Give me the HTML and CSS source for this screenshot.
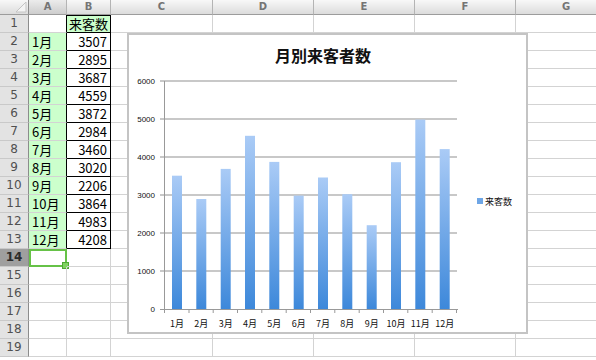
FILE: index.html
```html
<!DOCTYPE html>
<html lang="ja">

<head>
    <meta charset="UTF-8">
    <title>月別来客者数</title>
    <link rel="stylesheet" href="styles.css">
</head>

<body>
    <div class="sheet">
        <div class="row head">
            <div class="corner"><svg width="12" height="12" viewBox="0 0 12 12"><path d="M11 1 L11 11 L1 11 Z" fill="#f4f4f4" stroke="#c4c4c4"/></svg></div>
            <div class="col sel">A</div><div class="col">B</div><div class="col">C</div><div class="col">D</div><div class="col">E</div><div class="col">F</div><div class="col">G</div>
        </div>
        <div class="row"><div class="num">1</div><div class="c a-edge"></div><div class="c b hl">来客数</div><div class="c"></div><div class="c"></div><div class="c"></div><div class="c"></div><div class="c"></div></div>
        <div class="row"><div class="num">2</div><div class="c a hl">1月</div><div class="c b r">3507</div><div class="c"></div><div class="c"></div><div class="c"></div><div class="c"></div><div class="c"></div></div>
        <div class="row"><div class="num">3</div><div class="c a hl">2月</div><div class="c b r">2895</div><div class="c"></div><div class="c"></div><div class="c"></div><div class="c"></div><div class="c"></div></div>
        <div class="row"><div class="num">4</div><div class="c a hl">3月</div><div class="c b r">3687</div><div class="c"></div><div class="c"></div><div class="c"></div><div class="c"></div><div class="c"></div></div>
        <div class="row"><div class="num">5</div><div class="c a hl">4月</div><div class="c b r">4559</div><div class="c"></div><div class="c"></div><div class="c"></div><div class="c"></div><div class="c"></div></div>
        <div class="row"><div class="num">6</div><div class="c a hl">5月</div><div class="c b r">3872</div><div class="c"></div><div class="c"></div><div class="c"></div><div class="c"></div><div class="c"></div></div>
        <div class="row"><div class="num">7</div><div class="c a hl">6月</div><div class="c b r">2984</div><div class="c"></div><div class="c"></div><div class="c"></div><div class="c"></div><div class="c"></div></div>
        <div class="row"><div class="num">8</div><div class="c a hl">7月</div><div class="c b r">3460</div><div class="c"></div><div class="c"></div><div class="c"></div><div class="c"></div><div class="c"></div></div>
        <div class="row"><div class="num">9</div><div class="c a hl">8月</div><div class="c b r">3020</div><div class="c"></div><div class="c"></div><div class="c"></div><div class="c"></div><div class="c"></div></div>
        <div class="row"><div class="num">10</div><div class="c a hl">9月</div><div class="c b r">2206</div><div class="c"></div><div class="c"></div><div class="c"></div><div class="c"></div><div class="c"></div></div>
        <div class="row"><div class="num">11</div><div class="c a hl">10月</div><div class="c b r">3864</div><div class="c"></div><div class="c"></div><div class="c"></div><div class="c"></div><div class="c"></div></div>
        <div class="row"><div class="num">12</div><div class="c a hl">11月</div><div class="c b r">4983</div><div class="c"></div><div class="c"></div><div class="c"></div><div class="c"></div><div class="c"></div></div>
        <div class="row"><div class="num">13</div><div class="c a hl">12月</div><div class="c b r">4208</div><div class="c"></div><div class="c"></div><div class="c"></div><div class="c"></div><div class="c"></div></div>
        <div class="row"><div class="num on">14</div><div class="c active"><span class="handle"></span></div><div class="c"></div><div class="c"></div><div class="c"></div><div class="c"></div><div class="c"></div><div class="c"></div></div>
        <div class="row"><div class="num">15</div><div class="c"></div><div class="c"></div><div class="c"></div><div class="c"></div><div class="c"></div><div class="c"></div><div class="c"></div></div>
        <div class="row"><div class="num">16</div><div class="c"></div><div class="c"></div><div class="c"></div><div class="c"></div><div class="c"></div><div class="c"></div><div class="c"></div></div>
        <div class="row"><div class="num">17</div><div class="c"></div><div class="c"></div><div class="c"></div><div class="c"></div><div class="c"></div><div class="c"></div><div class="c"></div></div>
        <div class="row"><div class="num">18</div><div class="c"></div><div class="c"></div><div class="c"></div><div class="c"></div><div class="c"></div><div class="c"></div><div class="c"></div></div>
        <div class="row"><div class="num">19</div><div class="c"></div><div class="c"></div><div class="c"></div><div class="c"></div><div class="c"></div><div class="c"></div><div class="c"></div></div>
    </div>

    <!-- グラフ (シート上に浮かぶオブジェクト) -->
    <div class="chart">
        <svg width="401" height="301" viewBox="127 33 401 301">
            <defs>
                <linearGradient id="bar" x1="0" y1="0" x2="0" y2="1">
                    <stop offset="0" stop-color="#aacbf6"/>
                    <stop offset="1" stop-color="#3d88da"/>
                </linearGradient>
            </defs>
            <text class="title" x="323" y="62" text-anchor="middle">月別来客者数</text>

            <g class="grid">
                <line x1="160" y1="81" x2="457" y2="81"/>
                <line x1="160" y1="119" x2="457" y2="119"/>
                <line x1="160" y1="157" x2="457" y2="157"/>
                <line x1="160" y1="195" x2="457" y2="195"/>
                <line x1="160" y1="233" x2="457" y2="233"/>
                <line x1="160" y1="271" x2="457" y2="271"/>
            </g>
            <g class="ylab" text-anchor="end">
                <text x="155" y="84">6000</text>
                <text x="155" y="122">5000</text>
                <text x="155" y="160">4000</text>
                <text x="155" y="198">3000</text>
                <text x="155" y="236">2000</text>
                <text x="155" y="274">1000</text>
                <text x="155" y="312">0</text>
            </g>

            <g fill="url(#bar)">
                <rect x="172" y="175.7" width="10" height="133.3"/>
                <rect x="196.3" y="199" width="10" height="110"/>
                <rect x="220.7" y="168.9" width="10" height="140.1"/>
                <rect x="245" y="135.8" width="10" height="173.2"/>
                <rect x="269.3" y="161.9" width="10" height="147.1"/>
                <rect x="293.7" y="195.6" width="10" height="113.4"/>
                <rect x="318" y="177.5" width="10" height="131.5"/>
                <rect x="342.3" y="194.2" width="10" height="114.8"/>
                <rect x="366.7" y="225.2" width="10" height="83.8"/>
                <rect x="391" y="162.2" width="10" height="146.8"/>
                <rect x="415.3" y="119.6" width="10" height="189.4"/>
                <rect x="439.7" y="149.1" width="10" height="159.9"/>
            </g>

            <g class="axis">
                <line x1="164.5" y1="81" x2="164.5" y2="310"/>
                <line x1="160" y1="309.5" x2="458" y2="309.5"/>
                <path d="M164.5 309 v4 M189 309 v4 M213.2 309 v4 M237.5 309 v4 M261.8 309 v4 M286.2 309 v4 M310.5 309 v4 M334.8 309 v4 M359.2 309 v4 M383.5 309 v4 M407.8 309 v4 M432.2 309 v4 M456.5 309 v4"/>
            </g>

            <g class="xlab" text-anchor="middle">
                <text x="177" y="327">1月</text>
                <text x="201.3" y="327">2月</text>
                <text x="225.7" y="327">3月</text>
                <text x="250" y="327">4月</text>
                <text x="274.3" y="327">5月</text>
                <text x="298.7" y="327">6月</text>
                <text x="323" y="327">7月</text>
                <text x="347.3" y="327">8月</text>
                <text x="371.7" y="327">9月</text>
                <text x="396" y="327">10月</text>
                <text x="420.3" y="327">11月</text>
                <text x="444.7" y="327">12月</text>
            </g>

            <rect x="477" y="198" width="6" height="6" fill="#6ea6e6"/>
            <text class="legend" x="485" y="205">来客数</text>
        </svg>
    </div>
</body>

</html>
```

FILE: styles.css
```css
body {
    margin: 0;
    background-color: #fff;
    font-family: "Noto Sans CJK JP", sans-serif;
    overflow: hidden;
}

.sheet {
    width: 620px;
}

/* 1行 = 行番号 + A〜G列 */
.row {
    display: grid;
    grid-template-columns: 29px 38px 44px 102px 101px 101px 101px 101px;
    height: 18px;
}

.row.head {
    height: 15px;
}

.corner,
.col {
    box-sizing: border-box;
    background: linear-gradient(#f8f8f8, #dcdcdc);
    border-right: 1px solid #b4b4b4;
    border-bottom: 1px solid #9c9c9c;
    font-family: "DejaVu Sans", sans-serif;
    font-size: 10px;
    font-weight: bold;
    color: #747474;
    text-align: center;
    line-height: 14px;
}

.corner {
    display: flex;
    justify-content: flex-end;
    align-items: flex-end;
    padding: 0 1px 1px 0;
    border-right-color: #8c8c8c;
}

.col.sel {
    background: linear-gradient(#ececec, #cdcdcd);
}

.num {
    box-sizing: border-box;
    background-color: #e3e3e3;
    border-right: 1px solid #8c8c8c;
    border-bottom: 1px solid #c9c9c9;
    font-family: "DejaVu Sans", sans-serif;
    font-size: 12px;
    color: #505050;
    text-align: center;
    line-height: 17px;
}

.num.on {
    background-color: #9f9f9f;
    color: #2c2c2c;
    font-weight: bold;
}

.c {
    box-sizing: border-box;
    border-right: 1px solid #d3d3d3;
    border-bottom: 1px solid #d3d3d3;
    font-size: 13px;
    line-height: 17px;
    color: #000;
    padding: 0 3px;
    white-space: nowrap;
    position: relative;
}

.hl {
    background-color: #ccffcc;
}

.a,
.a-edge {
    border-right-color: #000;
}

.b {
    border-right-color: #000;
    border-bottom-color: #000;
}

.b.hl {
    box-shadow: inset 0 1px 0 #000;
    padding: 0 2px;
}

.r {
    text-align: right;
    padding-right: 3px;
}

.active {
    outline: 2px solid #66c247;
    outline-offset: -2px;
}

.handle {
    position: absolute;
    right: -3px;
    bottom: -3px;
    width: 5px;
    height: 5px;
    background-color: #7fd35f;
    border: 1px solid #4fa834;
}

.chart {
    position: absolute;
    left: 127px;
    top: 33px;
    width: 401px;
    height: 301px;
    box-sizing: border-box;
    background-color: #fff;
    border: 2px solid #c4c4c4;
    overflow: hidden;
}

.chart svg {
    display: block;
    margin: -2px 0 0 -2px;
}

.title {
    font-size: 16px;
    font-weight: bold;
    fill: #111;
}

.grid line {
    stroke: #c8c8c8;
    stroke-width: 2;
}

.axis line,
.axis path {
    stroke: #999;
    stroke-width: 1;
    fill: none;
}

.ylab text {
    font-family: "Liberation Sans", sans-serif;
    font-size: 8px;
    fill: #111;
}

.xlab text,
.legend {
    font-size: 9px;
    fill: #111;
}
```
